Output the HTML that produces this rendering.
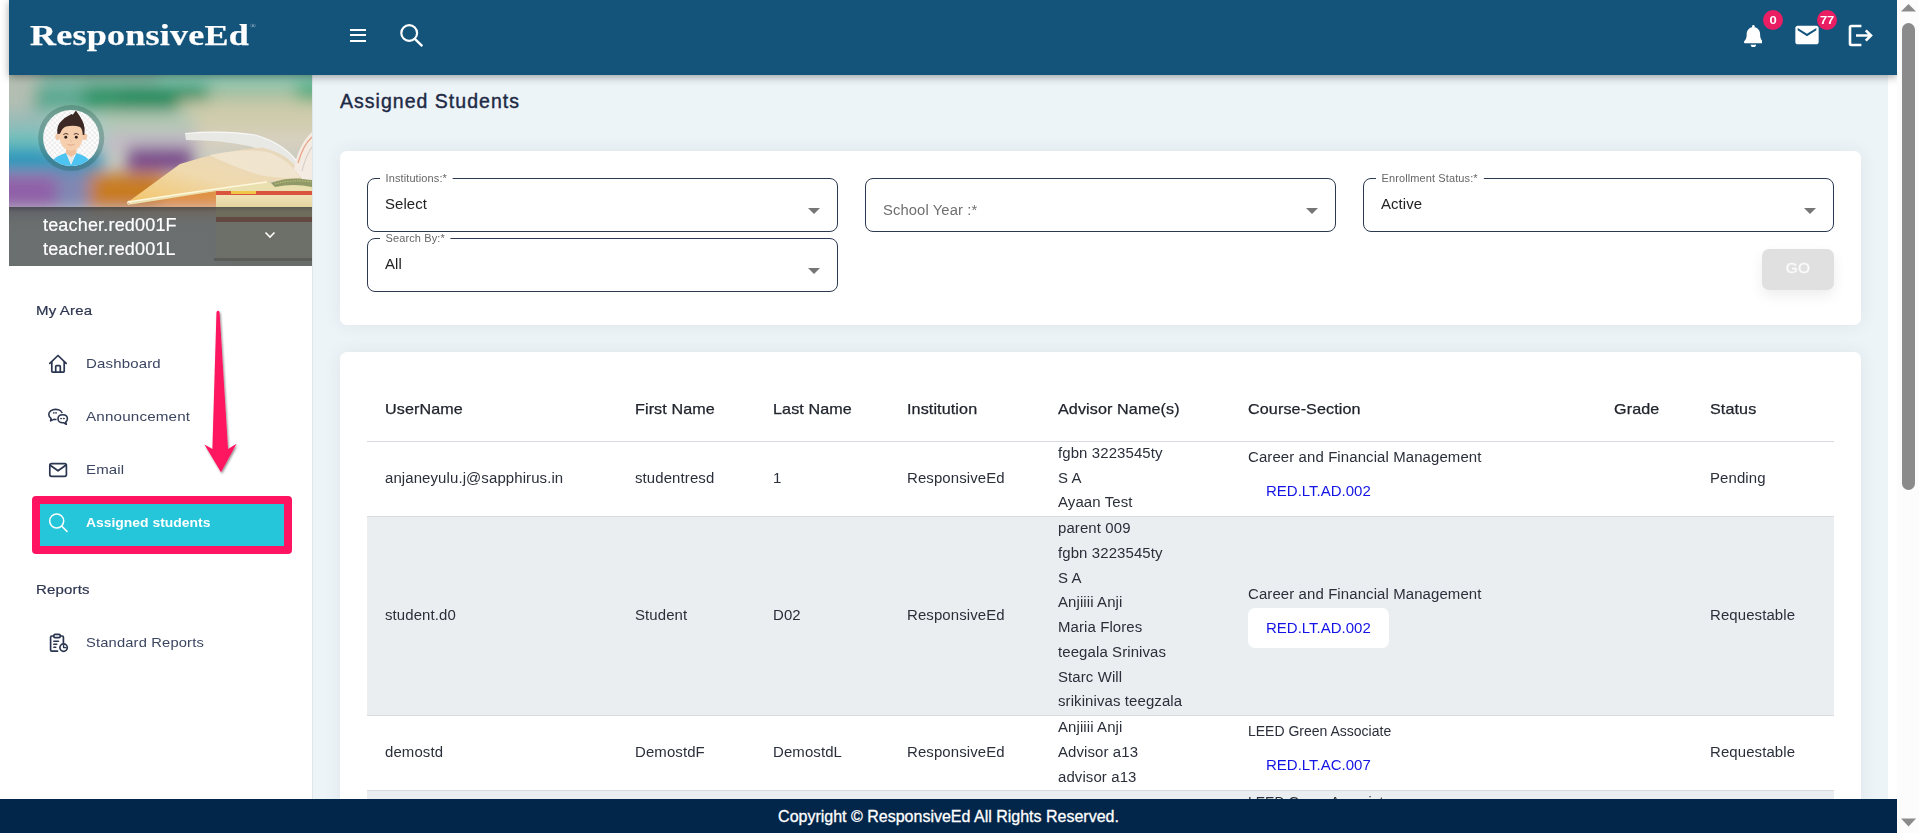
<!DOCTYPE html>
<html lang="en">
<head>
<meta charset="utf-8">
<title>Assigned Students</title>
<style>
*{box-sizing:border-box;margin:0;padding:0}
html,body{width:1919px;height:833px;overflow:hidden;background:#fff}
body{position:relative;font-family:"Liberation Sans","DejaVu Sans",sans-serif;color:#2b3245;font-size:14px}
.abs{position:absolute}
#sidebar,#header,#fcard,#tcard,#go{will-change:transform}
/* content background */
#content{left:313px;top:75px;width:1575px;height:724px;background:#edf4f8}
/* header */
#header{left:9px;top:0;width:1888px;height:75px;background:#14547b;box-shadow:0 2px 8px rgba(0,0,0,.35);z-index:5}
#logo{left:21px;top:12px;font-family:"Liberation Serif",serif;font-weight:bold;font-size:30px;color:#fff;letter-spacing:.2px;line-height:40px;white-space:nowrap;-webkit-text-stroke:.25px #fff;transform:scaleX(1.2);transform-origin:0 0}
#logo sup{font-size:6px;font-weight:normal;position:relative;top:-6px;left:1px;opacity:.7;-webkit-text-stroke:0}
/* sidebar */
#sidebar{left:9px;top:75px;width:303px;height:724px;background:#fff}
#sideborder{left:312px;top:75px;width:1px;height:724px;background:#dfe5ea}
/* footer */
#footer{left:0;top:799px;width:1897px;height:34px;background:#02264a;color:#fff;z-index:6;text-align:center;font-size:16px;line-height:35px;-webkit-text-stroke:.3px #fff}
/* scrollbar */
#scroll{left:1897px;top:0;width:22px;height:833px;background:#fcfcfc;z-index:7}
#thumb{left:5px;top:23px;width:13px;height:467px;border-radius:7px;background:#8b8b8b}

/* header icons */
.hbar{left:341px;width:16px;height:2px;background:#fff}
.badge{width:20px;height:20px;border-radius:50%;background:#e91e63;color:#fff;font-weight:bold;font-size:11px;line-height:20px;text-align:center;top:10px}
/* sidebar */
#profile{left:0;top:0;width:303px;height:191px;overflow:hidden}
#pband{left:0;top:132px;width:303px;height:59px;background:linear-gradient(rgba(52,58,58,.78),rgba(64,68,68,.7) 5px)}
#pname{left:34px;top:139px;-webkit-text-stroke:.2px #fff;color:#fff;font-size:18px;letter-spacing:.18px;line-height:23.5px;white-space:nowrap}
.mhead{-webkit-text-stroke:.2px #2d3550;left:27px;font-size:13.500px;letter-spacing:.15px;transform:scaleX(1.11);transform-origin:0 0;color:#2d3550;line-height:20px;white-space:nowrap}
.mitem{left:76.500px;font-size:13.500px;letter-spacing:.15px;transform:scaleX(1.11);transform-origin:0 0;color:#3b4560;line-height:20px;white-space:nowrap}
.micon{left:38px;width:22px;height:22px}
#actbox{left:23px;top:421px;width:260px;height:58px;border:8px solid #ff1461;border-radius:4px;background:#26c6da}

/* main */
#title{left:340px;top:87.700px;font-size:19.500px;letter-spacing:1.02px;color:#1e2a45;line-height:26px;-webkit-text-stroke:.4px #1e2a45;white-space:nowrap}
#fcard{left:340px;top:151px;width:1521px;height:174px}
.sel{width:471px;height:54px;border:1.3px solid #2d394f;border-radius:8px;background:#fff}
.sel .lab{position:absolute;left:12px;top:-6px;padding:0 5px;background:#fff;font-size:10px;letter-spacing:.1px;color:#666;line-height:11px;transform:scaleX(1.1);transform-origin:0 50%;white-space:nowrap}
.sel .val{position:absolute;left:17px;top:15px;font-size:14px;letter-spacing:.1px;transform:scaleX(1.065);transform-origin:0 50%;color:#222;line-height:20px;white-space:nowrap}
.sel .ph{position:absolute;left:17px;top:21px;font-size:14px;letter-spacing:.1px;transform:scaleX(1.055);transform-origin:0 50%;color:#6f6f6f;line-height:20px;white-space:nowrap}
.sel .car{position:absolute;right:17.300px;top:28.700px;width:0;height:0;border-left:6px solid transparent;border-right:6px solid transparent;border-top:6px solid #767676}
#go{left:1762px;top:249px;width:72px;height:41px;border-radius:7px;background:#e0e0e0;color:#fafafa;font-size:15.500px;line-height:38px;text-align:center;letter-spacing:.3px;-webkit-text-stroke:.3px #fafafa;box-shadow:0 6px 14px rgba(0,0,0,.07)}
#tcard{left:340px;top:352px;width:1521px;height:520px}
#tbl{left:27px;top:24px;width:1467px;border-collapse:collapse;table-layout:fixed;font-size:14px;letter-spacing:.1px;color:#2a2f3a;line-height:24.750px}
#tbl th{height:65px;text-align:left;font-weight:normal;font-size:15px;letter-spacing:.1px;color:#20242c;padding:2px 0 0 18px;border-bottom:1px solid #d7dbdf;-webkit-text-stroke:.25px #20242c;white-space:nowrap}
#tbl td{padding:0 0 0 18px;border-bottom:1px solid #d7dbdf;vertical-align:middle;white-space:nowrap}
#tbl tr.g td{background:#eaeef1}
.lk{display:inline-block;height:40px;line-height:40px;padding:0 18px;border-radius:7px;background:#fff;color:#1414e6;font-size:15px;letter-spacing:0;margin-top:1px}
.cs{line-height:24.750px}

.c{position:relative;top:-.6px;transform:scaleX(1.068);transform-origin:0 50%}
.c2{position:relative;top:-.8px}
.cs{transform:scaleX(1.068);transform-origin:0 50%}
.cs.nar{letter-spacing:0;transform:scaleX(1)}
#tbl th span{display:inline-block;transform:scaleX(1.075);transform-origin:0 50%}
.badge span{display:inline-block;transform:scaleX(1.18)}
.card{background:#fff;border-radius:7px;box-shadow:0 0 18px rgba(40,60,70,.075)}
</style>
</head>
<body>
<div id="content" class="abs"></div>
<div id="title" class="abs">Assigned Students</div>
<div id="fcard" class="abs card">
  <div class="abs sel" style="left:27px;top:27px"><span class="lab">Institutions:*</span><span class="val">Select</span><span class="car"></span></div>
  <div class="abs sel" style="left:525px;top:27px"><span class="ph">School Year :*</span><span class="car"></span></div>
  <div class="abs sel" style="left:1023px;top:27px"><span class="lab">Enrollment Status:*</span><span class="val">Active</span><span class="car"></span></div>
  <div class="abs sel" style="left:27px;top:87px"><span class="lab">Search By:*</span><span class="val">All</span><span class="car"></span></div>
</div>
<div id="go" class="abs">GO</div>
<div id="tcard" class="abs card">
<table id="tbl" class="abs">
<colgroup><col style="width:250px"><col style="width:138px"><col style="width:134px"><col style="width:151px"><col style="width:190px"><col style="width:366px"><col style="width:96px"><col style="width:142px"></colgroup>
<thead><tr><th><span>UserName</span></th><th><span>First Name</span></th><th><span>Last Name</span></th><th><span>Institution</span></th><th><span>Advisor Name(s)</span></th><th><span>Course-Section</span></th><th><span>Grade</span></th><th><span>Status</span></th></tr></thead>
<tbody>
<tr><td><div class="c">anjaneyulu.j@sapphirus.in</div></td><td><div class="c">studentresd</div></td><td><div class="c">1</div></td><td><div class="c">ResponsiveEd</div></td><td><div class="c">fgbn 3223545ty<br>S A<br>Ayaan Test</div></td><td><div class="c2"><div class="cs">Career and Financial Management</div><span class="lk">RED.LT.AD.002</span></div></td><td></td><td><div class="c">Pending</div></td></tr>
<tr class="g"><td><div class="c">student.d0</div></td><td><div class="c">Student</div></td><td><div class="c">D02</div></td><td><div class="c">ResponsiveEd</div></td><td><div class="c">parent 009<br>fgbn 3223545ty<br>S A<br>Anjiiii Anji<br>Maria Flores<br>teegala Srinivas<br>Starc Will<br>srikinivas teegzala</div></td><td><div class="c2"><div class="cs">Career and Financial Management</div><span class="lk">RED.LT.AD.002</span></div></td><td></td><td><div class="c">Requestable</div></td></tr>
<tr><td><div class="c">demostd</div></td><td><div class="c">DemostdF</div></td><td><div class="c">DemostdL</div></td><td><div class="c">ResponsiveEd</div></td><td><div class="c">Anjiiii Anji<br>Advisor a13<br>advisor a13</div></td><td><div class="c2"><div class="cs nar">LEED Green Associate</div><span class="lk">RED.LT.AC.007</span></div></td><td></td><td><div class="c">Requestable</div></td></tr>
<tr class="g"><td><div class="c">demostd2</div></td><td><div class="c">Demostd2F</div></td><td><div class="c">Demostd2L</div></td><td><div class="c">ResponsiveEd</div></td><td><div class="c">Anjiiii Anji<br>Advisor a13</div></td><td><div class="c2"><div class="cs nar">LEED Green Associate</div><span class="lk">RED.LT.AC.007</span></div></td><td></td><td><div class="c">Requestable</div></td></tr>
</tbody>
</table>
</div>
<div id="sidebar" class="abs">
  <div id="profile" class="abs">
    <svg class="abs" style="left:0;top:0" width="303" height="191" viewBox="0 0 303 191">
      <defs>
        <filter id="bl" x="-10%" y="-10%" width="120%" height="120%"><feGaussianBlur stdDeviation="8"/></filter>
        <filter id="bl2" x="-10%" y="-10%" width="120%" height="120%"><feGaussianBlur stdDeviation="3"/></filter>
        <linearGradient id="pg" x1="0" y1="1" x2="1" y2="0"><stop offset="0" stop-color="#f3c56a"/><stop offset=".45" stop-color="#efd9ae"/><stop offset="1" stop-color="#e6d8c0"/></linearGradient>
        <linearGradient id="bk" x1="0" y1="0" x2="0" y2="1"><stop offset="0" stop-color="#f0e2b4"/><stop offset="1" stop-color="#d9c990"/></linearGradient>
        <clipPath id="cp"><rect width="303" height="191"/></clipPath>
      </defs>
      <g clip-path="url(#cp)">
      <rect width="303" height="191" fill="#c8ccc0"/>
      <g filter="url(#bl)">
        <rect x="-20" y="-20" width="350" height="32" fill="#86b8a8"/>
        <rect x="-20" y="-20" width="50" height="60" fill="#b4beb2"/>
        <rect x="25" y="12" width="60" height="24" fill="#5aa890"/>
        <rect x="75" y="10" width="130" height="26" fill="#2a9468"/>
        <rect x="110" y="14" width="80" height="18" fill="#1f8a5c"/>
        <rect x="150" y="-12" width="170" height="22" fill="#86c8b4"/>
        <rect x="200" y="10" width="95" height="18" fill="#a4c0a0"/>
        <rect x="288" y="8" width="30" height="22" fill="#4aa878"/>
        <rect x="170" y="26" width="150" height="34" fill="#cfccac"/>
        <rect x="95" y="36" width="90" height="24" fill="#b4c8b4"/>
        <rect x="-20" y="36" width="60" height="24" fill="#98bcb8"/>
        <rect x="-20" y="56" width="110" height="20" fill="#6cc0bc"/>
        <rect x="-20" y="74" width="115" height="22" fill="#2494bc"/>
        <rect x="40" y="40" width="55" height="36" fill="#a4ccc4"/>
        <rect x="95" y="58" width="100" height="18" fill="#c4bcc8"/>
        <rect x="190" y="56" width="130" height="20" fill="#d8d0c0"/>
        <rect x="118" y="72" width="66" height="24" fill="#78468a"/>
        <rect x="-20" y="98" width="72" height="40" fill="#9060a8"/>
        <rect x="48" y="96" width="36" height="40" fill="#8088b4"/>
        <rect x="80" y="98" width="75" height="40" fill="#c87c20"/>
        <rect x="150" y="104" width="70" height="32" fill="#e09040"/>
        <rect x="-20" y="136" width="240" height="70" fill="#cdd3d3"/>
      </g>
      <!-- book stack -->
      <rect x="207" y="116" width="96" height="4" fill="#d9543c"/>
      <rect x="222" y="116" width="25" height="3" fill="#f0c648"/>
      <rect x="207" y="120" width="96" height="22" fill="url(#bk)"/>
      <rect x="207" y="142" width="96" height="5" fill="#b4533c"/>
      <rect x="207" y="147" width="96" height="36" fill="#d8d3bf"/>
      <rect x="205" y="183" width="98" height="3" fill="#9a968a"/>
      <!-- open book -->
      <path d="M176 58.500 Q215 55 246 60 Q282 70 295 98 L291 104 Q274 80 240 71 Q212 65 177 65 Z" fill="#e9e9e6" opacity=".95"/>
      <path d="M176 58.500 Q215 55 246 60 Q282 70 295 98" stroke="#f8f8f8" stroke-width="1.200" fill="none"/>
      <path d="M119 127 L171 89 Q215 75 253 72.500 Q285 80 294 104 Q275 106 258 107 Q230 112 207 116 Z" fill="url(#pg)"/>
      <path d="M200 80 Q240 72 262 78 Q282 86 291 103 Q270 104 250 100 Q225 92 200 80 Z" fill="#f3ead8" opacity=".7"/>
      <path d="M119 127 Q190 116 258 107 Q272 110 303 109 L303 116 L207 116 L122 129.500 Z" fill="#eadfae"/>
      <path d="M119 127 Q190 116 258 107" stroke="#fff8dc" stroke-width="1.300" fill="none"/>
      <circle cx="120" cy="127.700" r="1.600" fill="none" stroke="#fff8dc" stroke-width=".9"/>
      <path d="M262 108 Q282 101 303 105 L303 112 Q284 108 266 112 Z" fill="#8f9a68"/>
      <path d="M266 109 Q284 104 303 107" stroke="#d9d27a" stroke-width=".9" stroke-dasharray="1.200 1.300" fill="none"/>
      <path d="M285 94 Q289 70 303 57 L303 105 L293 104 Z" fill="#f4ebe2"/>
      <path d="M289 88 Q294 70 303 62" stroke="#e9a88e" stroke-width="1.400" fill="none"/>
      <path d="M293 96 Q297 80 303 72" stroke="#d8d0cc" stroke-width="1.200" fill="none"/>
      </g>
    </svg>
    <svg class="abs" style="left:27px;top:29px" width="70" height="70" viewBox="0 0 70 70">
      <defs><clipPath id="av"><circle cx="35.200" cy="34" r="28.100"/></clipPath>
      <pattern id="chk" width="5" height="5" patternUnits="userSpaceOnUse"><rect width="5" height="5" fill="#fdfdfd"/><rect width="2.500" height="2.500" fill="#eeeeee"/><rect x="2.500" y="2.500" width="2.500" height="2.500" fill="#eeeeee"/></pattern></defs>
      <circle cx="35.200" cy="34" r="33.100" fill="#265a52" opacity=".32"/>
      <circle cx="35.200" cy="34" r="28.100" fill="url(#chk)"/>
      <g clip-path="url(#av)">
        <path d="M16 58 Q19 52 30 49 L35 60.800 L40.400 49 Q51 52 54.500 58 L54 66 L16 66 Z" fill="#4cc3f1"/>
        <path d="M31.300 51.500 L38.700 51.500 L35 60.800 Z" fill="#e8e8e8"/>
        <path d="M30 43 H40.400 V49.500 L35.200 53 L30 49.500 Z" fill="#efc09c"/>
        <ellipse cx="21.800" cy="32.800" rx="2.600" ry="3.300" fill="#f3c8a6"/>
        <ellipse cx="48.600" cy="32.800" rx="2.600" ry="3.300" fill="#f3c8a6"/>
        <path d="M23.300 30 Q23.300 21 35.200 21 Q47.100 21 47.100 30 Q47.100 41 41 45 Q35.200 48 29.400 45 Q23.300 41 23.300 30 Z" fill="#f5cfae"/>
        <path d="M21.300 30 Q20.500 22 24.500 18 Q29 13 35.500 10 L36.800 10.800 L39.900 6.600 Q44 12 46.500 17 Q49.500 23 48.300 31 L46.800 31 Q46.500 25 44 23 Q38 21 30 22.500 Q26 24 24 29.800 Z" fill="#3c2824"/>
        <path d="M27.300 30.500 Q29.800 28.500 32.300 30.300" stroke="#3c2824" stroke-width=".9" fill="none"/>
        <path d="M37.800 30.300 Q40.300 28.500 42.800 30.500" stroke="#3c2824" stroke-width=".9" fill="none"/>
        <circle cx="29.800" cy="33.300" r="1.450" fill="#2e1f1c"/>
        <circle cx="40.300" cy="33.300" r="1.450" fill="#2e1f1c"/>
        <path d="M31.500 40.300 Q35 42.300 38.500 40.300" stroke="#e0a88a" stroke-width="1" fill="none"/>
        <path d="M34 37 Q35 37.600 36 37" stroke="#e8b494" stroke-width=".8" fill="none"/>
      </g>
    </svg>
    <div id="pband" class="abs"></div>
    <div id="pname" class="abs">teacher.red001F<br>teacher.red001L</div>
    <svg class="abs" style="left:254.500px;top:156px" width="12" height="8" viewBox="0 0 12 8"><path d="M1.500 1.500 L6 6 L10.500 1.500" fill="none" stroke="#fff" stroke-width="1.600"/></svg>
  </div>
  <div class="abs mhead" style="top:226px">My Area</div>
  <div class="abs mitem" style="top:279px">Dashboard</div>
  <div class="abs mitem" style="top:332px;transform:scaleX(1.125)">Announcement</div>
  <div class="abs mitem" style="top:385px">Email</div>
  <div id="actbox" class="abs"></div>
  <div class="abs mitem" style="top:438px;color:#fff;font-weight:bold;font-size:13.500px;letter-spacing:0;transform:scaleX(1.03)">Assigned students</div>
  <div class="abs mhead" style="top:505px">Reports</div>
  <div class="abs mitem" style="top:558px;transform:scaleX(1.09)">Standard Reports</div>
  <svg class="abs" style="left:38px;top:278px" width="22" height="22" viewBox="0 0 22 22" fill="none" stroke="#2a3550" stroke-width="1.700" stroke-linejoin="round" stroke-linecap="round"><path d="M2.800 10.300 L11 2.500 L19.200 10.300"/><path d="M4.800 8.800 V18.300 Q4.800 19.200 5.700 19.200 H16.300 Q17.200 19.200 17.200 18.300 V8.800"/><path d="M8.700 19 V13.600 Q8.700 12.700 9.600 12.700 H12.400 Q13.300 12.700 13.300 13.600 V19"/></svg>
  <svg class="abs" style="left:38px;top:331px" width="24" height="22" viewBox="0 0 24 22" fill="none" stroke="#2a3550" stroke-width="1.600" stroke-linejoin="round" stroke-linecap="round"><path d="M8.600 3.400 C12.600 3.400 15.400 5.600 15.400 8.500 C15.400 11.400 12.600 13.500 8.600 13.500 C8 13.500 7.400 13.450 6.800 13.350 L3.600 14.900 L4 12.300 C2.600 11.400 1.800 10 1.800 8.500 C1.800 5.600 4.600 3.400 8.600 3.400 Z"/><path d="M15.700 8.700 C18.500 8.700 20.400 10.400 20.400 12.700 C20.400 14 19.800 15.100 18.800 15.800 L19.300 18.300 L16.700 16.700 C16.400 16.750 16 16.800 15.700 16.800 C12.900 16.800 11 15 11 12.700 C11 10.400 12.900 8.700 15.700 8.700 Z" fill="#fff" stroke="#fff" stroke-width="3.200"/><path d="M15.700 8.700 C18.500 8.700 20.400 10.400 20.400 12.700 C20.400 14 19.800 15.100 18.800 15.800 L19.300 18.300 L16.700 16.700 C16.400 16.750 16 16.800 15.700 16.800 C12.900 16.800 11 15 11 12.700 C11 10.400 12.900 8.700 15.700 8.700 Z"/><circle cx="6.700" cy="6.900" r=".45" fill="#2a3550" stroke-width=".700"/><circle cx="8.900" cy="6.900" r=".45" fill="#2a3550" stroke-width=".700"/><circle cx="14" cy="12.600" r=".5" fill="#2a3550" stroke-width=".800"/><circle cx="16.800" cy="12.600" r=".5" fill="#2a3550" stroke-width=".800"/></svg>
  <svg class="abs" style="left:38px;top:384px" width="22" height="22" viewBox="0 0 22 22" fill="none" stroke="#2a3550" stroke-width="1.700" stroke-linejoin="round" stroke-linecap="round"><rect x="2.800" y="4.700" width="16.600" height="12.600" rx="1.800"/><path d="M3.200 6.200 L11 11.800 L18.800 6.200"/></svg>
  <svg class="abs" style="left:38px;top:437px" width="22" height="22" viewBox="0 0 22 22" fill="none" stroke="#fff" stroke-width="1.500" stroke-linecap="round"><circle cx="9.700" cy="9" r="7"/><path d="M14.800 14.200 L20 19.400"/></svg>
  <svg class="abs" style="left:38px;top:557px" width="24" height="22" viewBox="0 0 24 22" fill="none" stroke="#2a3550" stroke-width="1.700" stroke-linejoin="round" stroke-linecap="round"><path d="M6.500 4 H4.800 Q3.600 4 3.600 5.200 V18 Q3.600 19.200 4.800 19.200 H10.500"/><path d="M13.500 4 H15.200 Q16.400 4 16.400 5.200 V10.500"/><rect x="6.800" y="2.400" width="6.400" height="3.200" rx="1.200"/><path d="M6.800 9.300 H11.500 M6.800 12.300 H9.800 M6.800 15.300 H8.800" stroke-width="1.500"/><circle cx="16.600" cy="15.600" r="3.700"/><path d="M16.600 13.300 V15.600 H18.900" stroke-width="1.400"/></svg>
  <svg class="abs" style="left:185px;top:230px;overflow:visible" width="50" height="175" viewBox="185 230 50 175"><defs><filter id="ash" x="-30%" y="-10%" width="160%" height="120%"><feDropShadow dx="1" dy="1.500" stdDeviation="1.200" flood-color="#000" flood-opacity=".45"/></filter></defs><path filter="url(#ash)" d="M207.500 237 Q209 234.500 210.500 237 L219 374 L227.600 368.800 L212 397.300 L195.400 369.400 L203.400 374 Z" fill="#ff1461"/></svg>
</div>
<div id="sideborder" class="abs"></div>
<div id="header" class="abs">
  <div id="logo" class="abs">ResponsiveEd<sup>®</sup></div>
  <div class="abs hbar" style="top:29px"></div>
  <div class="abs hbar" style="top:34px"></div>
  <div class="abs hbar" style="top:40px"></div>
  <svg class="abs" style="left:388px;top:20px" width="30" height="30" viewBox="0 0 30 30"><circle cx="12.2" cy="13" r="7.9" fill="none" stroke="#fff" stroke-width="2.2"/><path d="M17.8 18.9 L25.3 26.1" stroke="#fff" stroke-width="2.4" fill="none"/></svg>
  <svg class="abs" style="left:1734.700px;top:24.500px" width="18.800" height="22.500" viewBox="0 0 448 512" preserveAspectRatio="none"><path fill="#fff" d="M224 512c35.32 0 63.97-28.65 63.97-64H160.03c0 35.35 28.65 64 63.97 64zm215.39-149.71c-19.32-20.76-55.47-51.99-55.47-154.29 0-77.7-54.48-139.9-127.94-155.16V32c0-17.67-14.32-32-31.98-32s-31.98 14.33-31.98 32v20.84C118.56 68.1 64.08 130.3 64.08 208c0 102.3-36.15 133.53-55.47 154.29-6 6.45-8.66 14.16-8.61 21.71.11 16.4 12.98 32 32.1 32h383.8c19.12 0 32-15.6 32.1-32 .05-7.55-2.61-15.27-8.61-21.71z"/></svg>
  <div class="abs badge" style="left:1754px"><span>0</span></div>
  <svg class="abs" style="left:1783.900px;top:21.450px" width="28" height="28" viewBox="0 0 24 24"><path fill="#fff" d="M20 4H4c-1.100 0-1.990.900-1.990 2L2 18c0 1.100.900 2 2 2h16c1.100 0 2-.900 2-2V6c0-1.100-.900-2-2-2zm0 4l-8 5-8-5V6l8 5 8-5v2z"/></svg>
  <div class="abs badge" style="left:1808px"><span>77</span></div>
  <svg class="abs" style="left:1839px;top:24px" width="26" height="23" viewBox="0 0 26 23"><path d="M13.400 2 H3.2 Q2 2 2 3.200 V19.800 Q2 21 3.200 21 H13.400" fill="none" stroke="#fff" stroke-width="2.6"/><path d="M8 11.500 H22.500 M17.800 6.300 L23 11.500 L17.800 16.700" fill="none" stroke="#fff" stroke-width="2.6"/></svg>
</div>
<div id="footer" class="abs">Copyright © ResponsiveEd All Rights Reserved.</div>
<div id="scroll" class="abs"><div id="thumb" class="abs"></div><svg class="abs" style="left:0;top:0" width="22" height="833" viewBox="0 0 22 833"><path d="M4 11.500 L11.500 4 L19 11.500 Z" fill="#8b8b8b"/><path d="M4 818.500 L11.500 826.500 L19 818.500 Z" fill="#8b8b8b"/></svg></div>
</body>
</html>
